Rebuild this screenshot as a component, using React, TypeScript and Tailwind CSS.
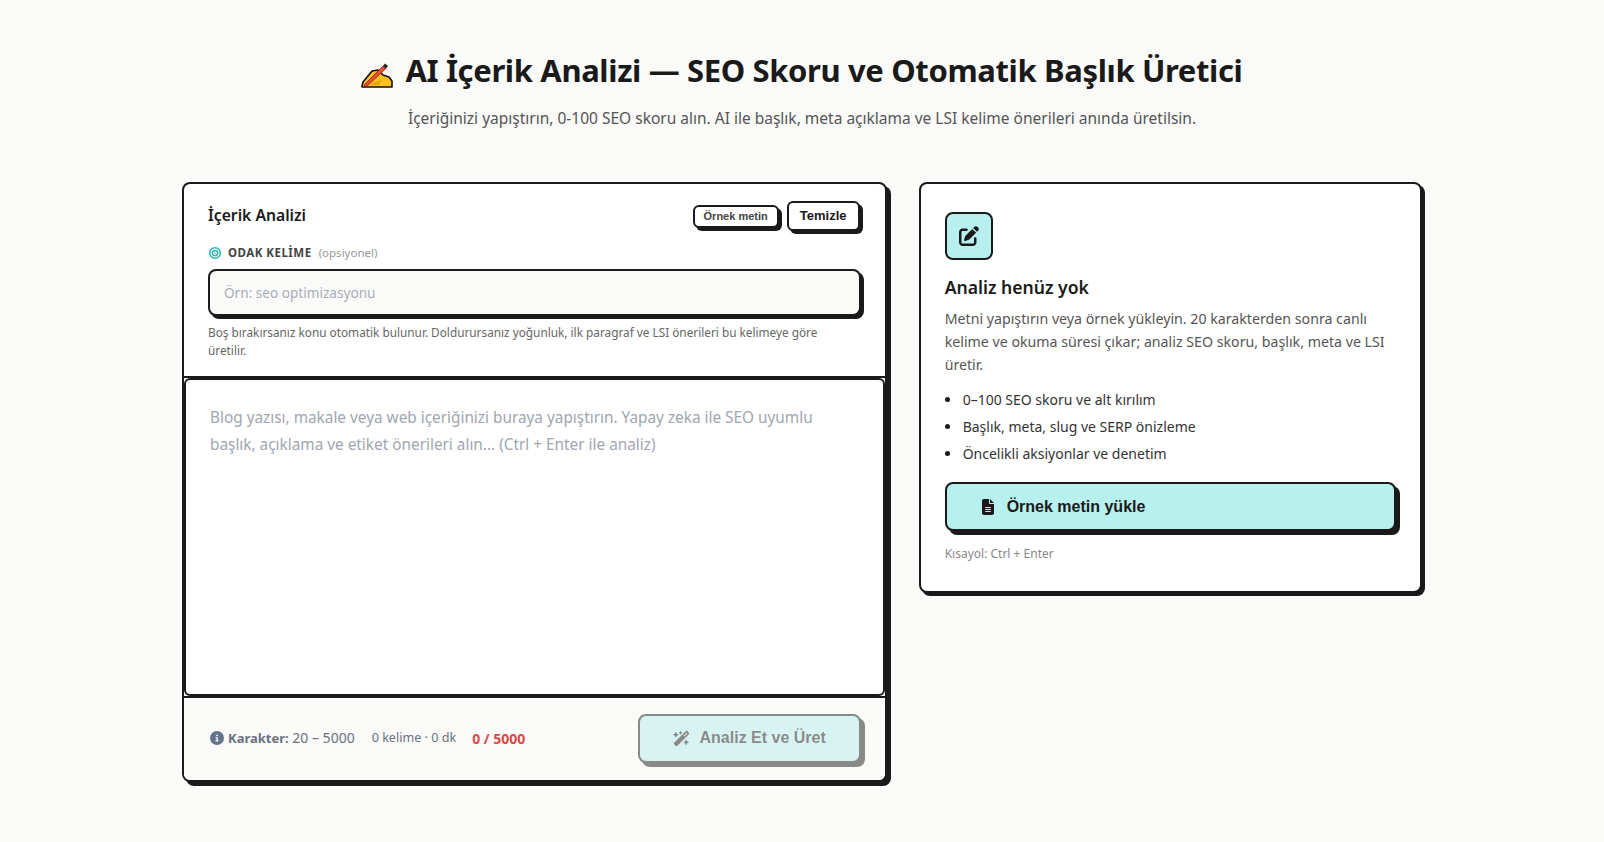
import { FaPenToSquare, FaWandMagicSparkles, FaFileLines, FaCircleInfo, FaBullseye } from "react-icons/fa6"

const plex = "font-['Noto_Sans','Roboto',sans-serif]"

function WritingHand() {
  return (
    <svg width="32" height="26" viewBox="0 0 32 26" className="mt-[10px] shrink-0">
      <path d="M1 24.5 L2 20 L11 9 L17 8 L22 13 L28 15 L31 19 L31 25 L1 25 Z" fill="#fcc21b" stroke="#111" strokeWidth="1.6" strokeLinejoin="round" />
      <path d="M11 21 L21 18 L18 23 L10 23 Z" fill="#e8a317" />
      <path d="M3 23 L22 4 L25 6.5 L5 25 Z" fill="#e94b2c" stroke="#7a1d10" strokeWidth="0.7" />
      <path d="M22 4 L24 1.5 L27 4 L25 6.5 Z" fill="#222" />
    </svg>
  )
}

export default function App() {
  return (
    <div className={`min-h-screen bg-[#fafaf8] text-[#1a1a1a] ${plex}`}>
      <div className="mx-auto w-[1240px] pt-[47px]">
        {/* Heading */}
        <div className="flex flex-col items-center">
          <h1 className="flex items-center gap-[12px] text-[31px] font-bold leading-[46px] tracking-[-0.37px]">
            <WritingHand />
            AI İçerik Analizi — SEO Skoru ve Otomatik Başlık Üretici
          </h1>
          <p className="mt-[12px] text-[15.5px] leading-[26px] text-[#555]">
            İçeriğinizi yapıştırın, 0-100 SEO skoru alın. AI ile başlık, meta açıklama ve LSI kelime önerileri anında üretilsin.
          </p>
        </div>

        <div className="mt-[51px] grid grid-cols-[1.4fr_1fr] items-start gap-[32px]">
          {/* Left card */}
          <div className="overflow-hidden rounded-[8px] border-2 border-[#1a1a1a] bg-white shadow-[4px_4px_0_#1a1a1a]">
            <div className="h-[194px] border-b-2 border-[#1a1a1a] px-[24px] pt-[15px]">
              <div className="flex h-[34px] items-center justify-between">
                <h2 className="text-[15.7px] font-semibold">İçerik Analizi</h2>
                <div className="flex items-start gap-[8px] pr-[1px]">
                  <button className="mt-[4px] h-[23px] w-[86px] rounded-[6px] border-2 border-[#1a1a1a] bg-white font-['Liberation_Sans',sans-serif] text-[11px] font-bold text-[#444] shadow-[3px_3px_0_#1a1a1a]">
                    Örnek metin
                  </button>
                  <button className="h-[30px] w-[73px] rounded-[6px] border-2 border-[#1a1a1a] bg-white font-['Liberation_Sans',sans-serif] text-[13px] font-bold shadow-[3px_3px_0_#1a1a1a]">
                    Temizle
                  </button>
                </div>
              </div>
              <div className="mt-[12px] flex h-[16px] items-center">
                <FaBullseye className="ml-[1px] text-[12px] text-[#2bb5a8]" />
                <span className="ml-[7px] text-[11.5px] font-bold tracking-[0.5px] text-[#444]">ODAK KELİME</span>
                <span className="ml-[7px] text-[11.5px] text-[#999]">(opsiyonel)</span>
              </div>
              <input
                placeholder="Örn: seo optimizasyonu"
                className="mt-[8px] block h-[47px] w-[653px] rounded-[8px] border-2 border-[#1a1a1a] bg-[#fafaf8] px-[14px] text-[13.6px] shadow-[3px_3px_0_#1a1a1a] outline-none placeholder:text-[#a8adb8]"
              />
              <p className="mt-[7px] max-w-[625px] text-[11.8px] leading-[18px] text-[#666]">
                Boş bırakırsanız konu otomatik bulunur. Doldurursanız yoğunluk, ilk paragraf ve LSI önerileri bu kelimeye göre üretilir.
              </p>
            </div>

            <textarea
              placeholder="Blog yazısı, makale veya web içeriğinizi buraya yapıştırın. Yapay zeka ile SEO uyumlu başlık, açıklama ve etiket önerileri alın... (Ctrl + Enter ile analiz)"
              className="block h-[318px] w-full resize-none rounded-[6px] border-2 border-[#1a1a1a] bg-white px-[24px] py-[24px] text-[15.35px] leading-[27px] outline-none placeholder:text-[#a0a6b1]"
            />

            <div className="flex h-[84px] items-center border-t-2 border-[#1a1a1a] bg-[#fafaf8] px-[24px] pb-[2px]">
              <FaCircleInfo className="ml-[2px] text-[14px] text-[#64748b]" />
              <span className="ml-[4px] text-[14px] text-[#6b7280]">
                <b className="text-[13px] font-bold">Karakter:</b> 20 – 5000
              </span>
              <span className="ml-[17px] text-[12.6px] text-[#6b7280]">0 kelime · 0 dk</span>
              <span className="ml-[16px] text-[14px] font-bold text-[#dc4a4a]">0 / 5000</span>
              <button className="ml-auto flex h-[49px] w-[223px] items-center justify-center gap-[10px] rounded-[8px] border-2 border-[#1a1a1a] bg-[#b8f0ee] font-['Liberation_Sans',sans-serif] text-[16px] font-bold opacity-50 shadow-[4px_4px_0_#1a1a1a]">
                <FaWandMagicSparkles className="text-[17px]" />
                Analiz Et ve Üret
              </button>
            </div>
          </div>

          {/* Right card */}
          <div className="h-[411px] rounded-[8px] border-2 border-[#1a1a1a] bg-white px-[24px] pt-[28px] shadow-[3px_3px_0_#1a1a1a]">
            <div className="flex h-[48px] w-[48px] items-center justify-center rounded-[8px] border-2 border-[#1a1a1a] bg-[#b8f0ee]">
              <FaPenToSquare className="text-[20px]" />
            </div>
            <h3 className="mt-[15px] text-[17.6px] font-semibold leading-[24px]">Analiz henüz yok</h3>
            <p className="mt-[8px] text-[14.2px] leading-[23px] text-[#555]">
              Metni yapıştırın veya örnek yükleyin. 20 karakterden sonra canlı kelime ve okuma süresi çıkar; analiz SEO skoru, başlık, meta ve LSI üretir.
            </p>
            <ul className="mt-[10px] flex flex-col">
              {["0–100 SEO skoru ve alt kırılım", "Başlık, meta, slug ve SERP önizleme", "Öncelikli aksiyonlar ve denetim"].map((item) => (
                <li key={item} className="flex h-[27px] items-center gap-[13px] text-[14px] text-[#333]">
                  <span className="h-[5px] w-[5px] rounded-full bg-[#1a1a1a]" />
                  {item}
                </li>
              ))}
            </ul>
            <button className="mt-[15px] flex h-[49px] w-[451px] items-center gap-[11px] rounded-[8px] border-2 border-[#1a1a1a] bg-[#b8f0ee] pl-[33px] font-['Liberation_Sans',sans-serif] text-[16px] font-bold shadow-[4px_4px_0_#1a1a1a]">
              <FaFileLines className="text-[16px]" />
              Örnek metin yükle
            </button>
            <p className="mt-[16px] text-[12px] leading-[14px] text-[#888]">Kısayol: Ctrl + Enter</p>
          </div>
        </div>
      </div>
    </div>
  )
}
